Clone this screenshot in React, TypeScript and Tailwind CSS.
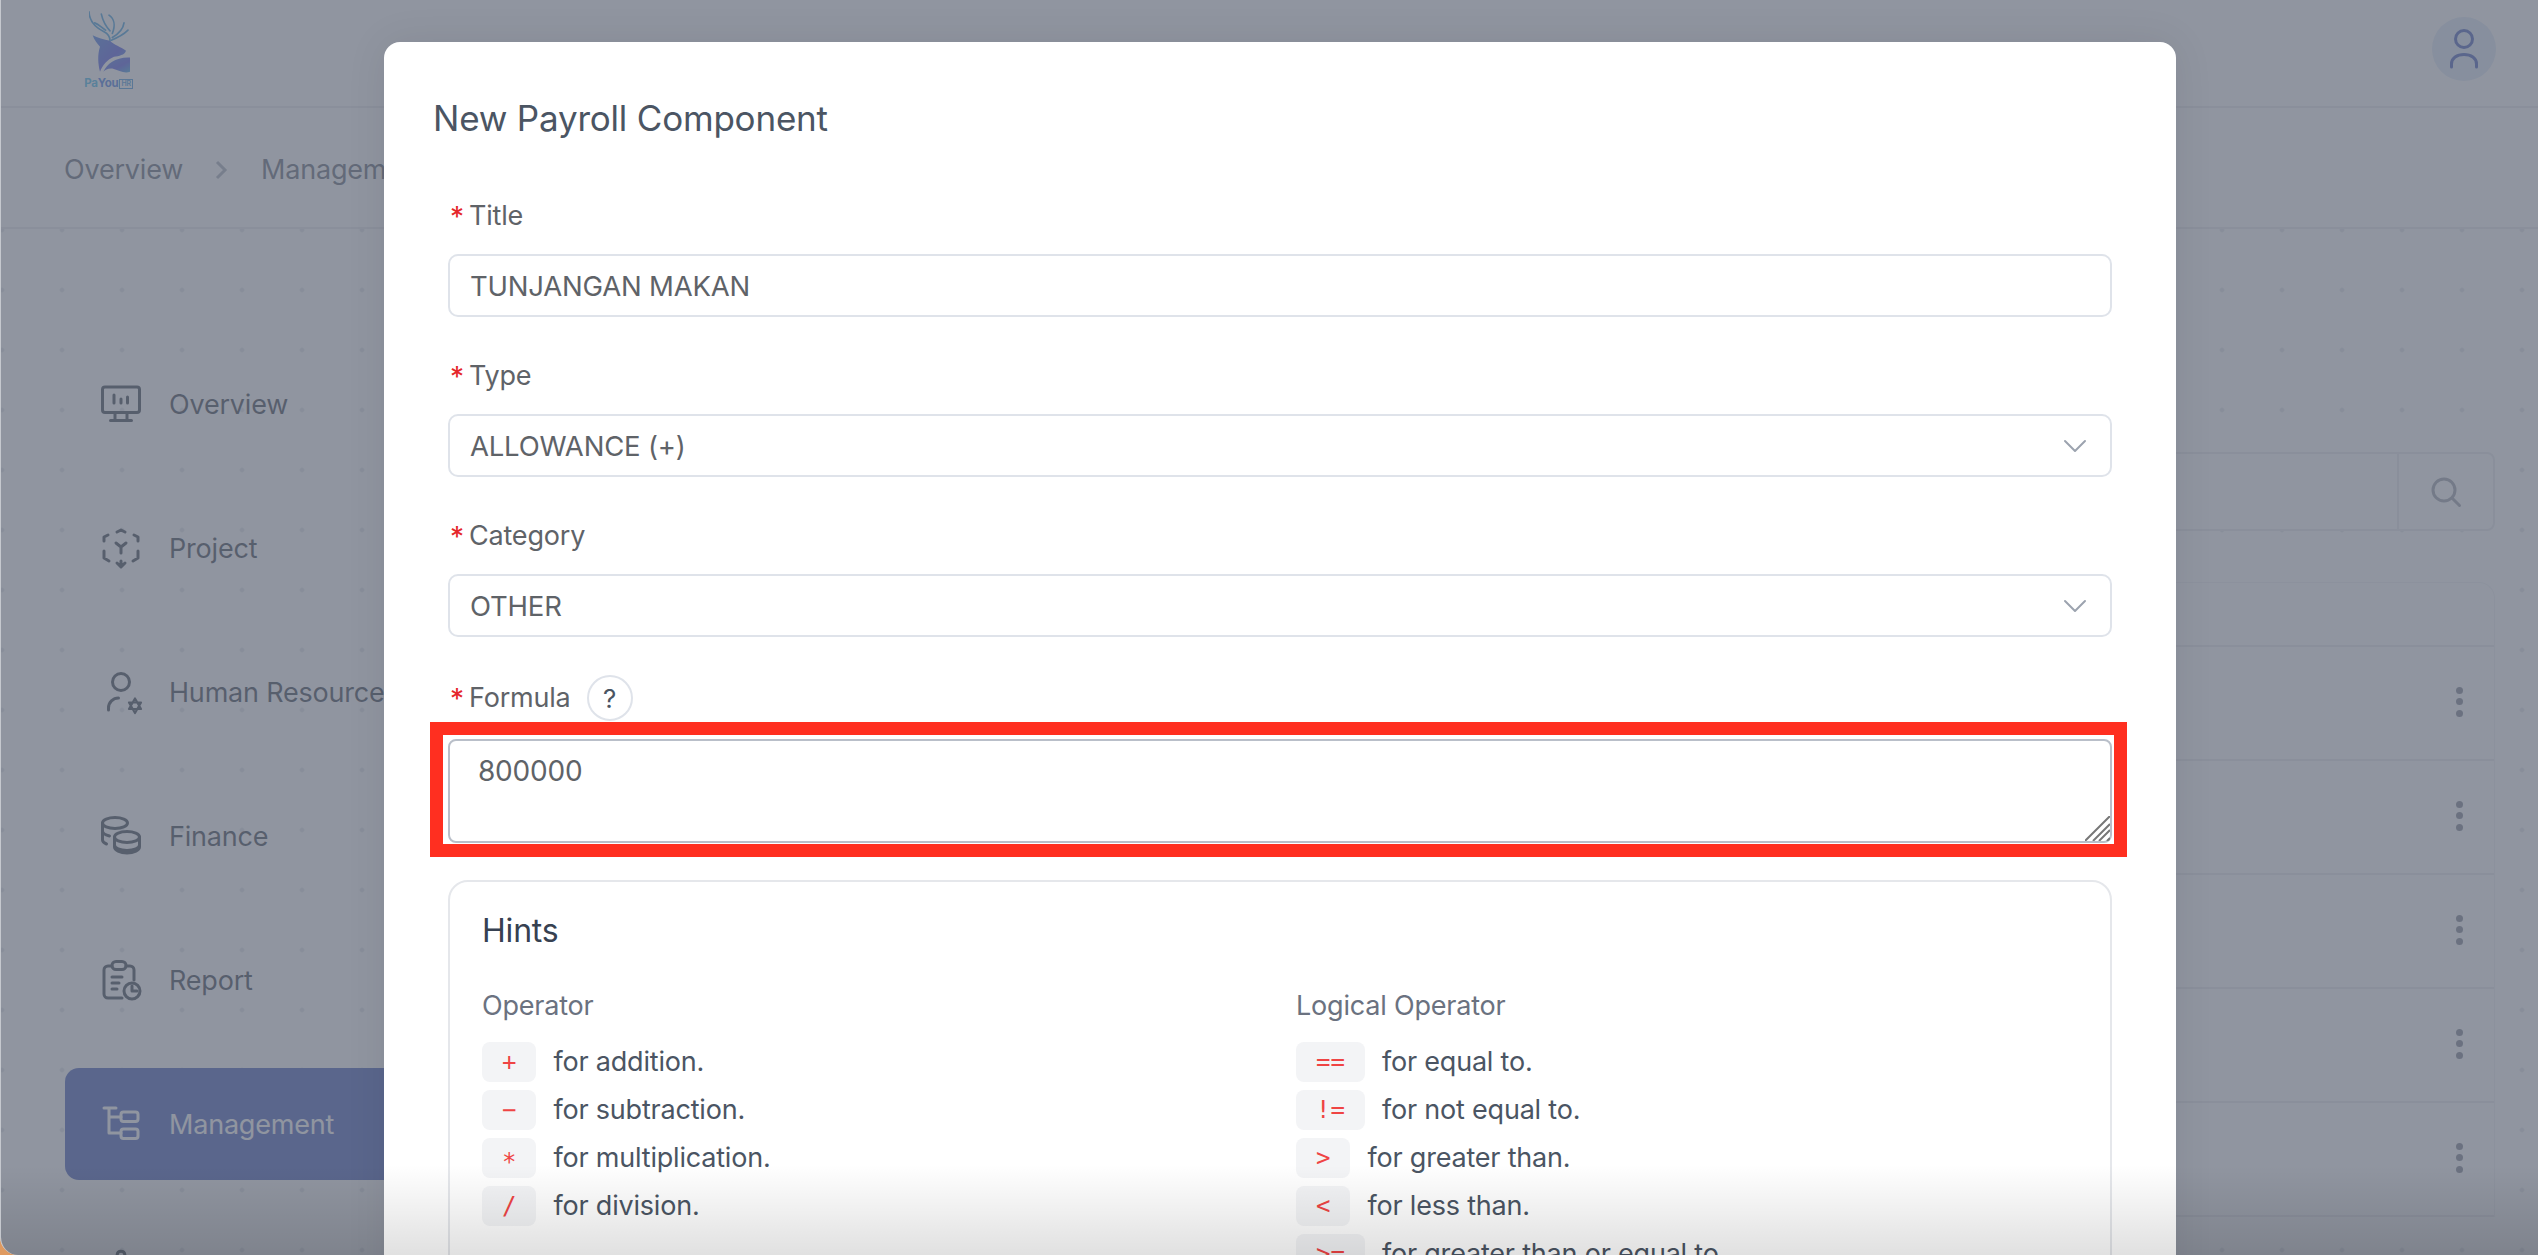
import React from "react";
import { Settings } from "lucide-react";

const navItems: { name: string; active?: boolean; icon: React.ReactNode }[] = [
  {
    name: "Overview",
    icon: (
      <>
        <rect x="1.5" y="3" width="37" height="25.5" rx="2.5" />
        <path d="M14 29v7M26 29v7M9.5 36.5h21M13 11v8M20 15v4M26.5 13v6" />
      </>
    ),
  },
  {
    name: "Project",
    icon: (
      <>
        <path d="M16 4l4-2 4 2M3 13V9l4-2M37 13V9l-4-2M3 23v7l5 3M37 23v7l-5 3M20 33v5M16 35l4 4 4-4M15 15l5 4 5-4M20 19v6" />
      </>
    ),
  },
  {
    name: "Human Resource",
    icon: (
      <>
        <circle cx="20" cy="10" r="8.5" />
        <path d="M7.5 38v-2a10 10 0 0 1 10-10" />
        <path d="M34 26.5l6 10.5H28zM34 41l-6-10.5h12z" strokeWidth="2.2" />
      </>
    ),
  },
  {
    name: "Finance",
    icon: (
      <>
        <ellipse cx="14" cy="7" rx="12.5" ry="5.5" />
        <path d="M1.5 7v17c0 2 1.5 3 4 4M1.5 15c0 2.500 3 4 7 5" />
        <ellipse cx="26" cy="21" rx="12.500" ry="5.500" />
        <path d="M13.500 21v10c0 3 5.500 6 12.500 6s12.500-3 12.500-6V21M13.500 29c0 3 5.500 5.500 12.500 5.500s12.500-2.500 12.500-5.500" />
      </>
    ),
  },
  {
    name: "Report",
    icon: (
      <>
        <path d="M11 6H7a4 4 0 0 0-4 4v24a4 4 0 0 0 4 4h14M25 6h4a4 4 0 0 1 4 4v10" />
        <rect x="11" y="1.500" width="14" height="8" rx="4" />
        <path d="M11 17h10M11 23h7M11 29h5" />
        <circle cx="31" cy="31" r="8" />
        <path d="M31 26v5h5" />
      </>
    ),
  },
  {
    name: "Management",
    active: true,
    icon: (
      <>
        <path d="M3 4h12M8 4v25h12M8 13h12" />
        <rect x="20" y="8" width="17" height="9.500" rx="2.500" />
        <rect x="20" y="25" width="17" height="9.500" rx="2.500" />
      </>
    ),
  },
];

const operators = [
  { op: "+", text: "for addition." },
  { op: "−", text: "for subtraction." },
  { op: "*", text: "for multiplication." },
  { op: "/", text: "for division." },
];

const logicalOperators = [
  { op: "==", text: "for equal to." },
  { op: "!=", text: "for not equal to." },
  { op: ">", text: "for greater than." },
  { op: "<", text: "for less than." },
  { op: ">=", text: "for greater than or equal to." },
];

function Logo() {
  return (
    <div className="mt-[11px] ml-[82px] flex w-[51px] flex-col items-center">
      <svg className="ml-[2px] h-[62px] w-[41px]" viewBox="255 33 123 185">
        <defs>
          <linearGradient id="deer" x1="0" y1="0" x2="1" y2="1">
            <stop offset="0" stopColor="#2a70e0" />
            <stop offset="0.6" stopColor="#3a40e0" />
            <stop offset="1" stopColor="#2098d8" />
          </linearGradient>
        </defs>
        <g fill="none" stroke="#2490d8" strokeWidth="5" strokeLinecap="round">
          <path d="M255 35c1 25 15 45 45 60 10 5 18 13 18 27" />
          <path d="M272 68c13 4 23 17 33 22M292 42c4 18 10 33 26 50M315 45c15 10 20 30 10 55M360 68c-2 17-15 32-35 44M372 90c-12 12-30 22-50 30" />
        </g>
        <path
          fill="url(#deer)"
          d="M266 105c14 7 34 13 52 17 12 13 32 18 48 30-4 13-21 16-36 18-20 8-34 25-42 45-6-25-8-50 0-75-8-10-18-22-22-35z"
        />
        <path
          fill="url(#deer)"
          d="M298 215c12-25 37-45 80-43v43c-18 7-33-5-53-10-13-1-21 3-27 10z"
        />
      </svg>
      <div className="mt-[5px] flex items-center text-[11.5px] leading-[11px] font-bold">
        <span className="text-[#28b0e8]">Pa</span>
        <span className="text-[#2868e0]">You</span>
        <span className="ml-[1px] border border-[#2888d8] px-[1px] text-[7px] leading-[8px] font-semibold text-[#2888d8]">
          HR
        </span>
      </div>
    </div>
  );
}

function Sidebar() {
  return (
    <aside className="flex w-[430px] shrink-0 flex-col gap-8 pt-[119px] pl-16">
      {navItems.map((item) => (
        <div
          key={item.name}
          className={`flex h-[112px] shrink-0 items-center gap-7 rounded-[14px] pl-9 ${
            item.active ? "bg-[#2946b0] text-white" : "text-[#1f2937]"
          }`}
        >
          <svg
            className="h-10 w-10 shrink-0 overflow-visible"
            viewBox="0 0 40 40"
            fill="none"
            stroke="currentColor"
            strokeWidth="3"
            strokeLinecap="round"
            strokeLinejoin="round"
          >
            {item.icon}
          </svg>
          <span className="pt-[2px] text-[27px]">{item.name}</span>
        </div>
      ))}
      <div className="flex h-[112px] shrink-0 items-center gap-7 pl-9 text-[#1f2937]">
        <Settings className="h-10 w-10" strokeWidth={1.8} />
      </div>
    </aside>
  );
}

function Kebab() {
  return (
    <div className="flex flex-col gap-[4.500px] pb-[3px]">
      <span className="h-[7px] w-[7px] rounded-full bg-[#6b7280]" />
      <span className="h-[7px] w-[7px] rounded-full bg-[#6b7280]" />
      <span className="h-[7px] w-[7px] rounded-full bg-[#6b7280]" />
    </div>
  );
}

function MainPanel() {
  return (
    <main className="flex flex-1 flex-col pt-[223px] pr-[43px]">
      <div className="ml-auto flex h-[79px] w-[700px] rounded-lg border-2 border-[#e5e7eb] bg-white">
        <div className="flex-1" />
        <div className="flex w-[96px] items-center justify-center border-l-2 border-[#e5e7eb]">
          <svg
            className="h-8 w-8"
            viewBox="0 0 32 32"
            fill="none"
            stroke="#8f959f"
            strokeWidth="3"
            strokeLinecap="round"
          >
            <circle cx="14" cy="14" r="11" />
            <path d="M22 22l7.500 7.500" />
          </svg>
        </div>
      </div>
      <div className="mt-[51px] rounded-tr-[16px] border-t border-r border-[#eef0f3] bg-white">
        <div className="h-[64px] border-b-2 border-[#e5e7eb]" />
        {[0, 1, 2, 3, 4].map((row) => (
          <div
            key={row}
            className="flex h-[114px] items-center justify-end border-b-2 border-[#e5e7eb] pr-[31px]"
          >
            <Kebab />
          </div>
        ))}
      </div>
    </main>
  );
}

function FieldLabel({ children }: { children: React.ReactNode }) {
  return (
    <div className="flex items-center text-[27px] text-[#5f6368]">
      <span className="mt-[2px] ml-[2px] w-[19px] text-[28px] leading-none text-[#e5252a]">*</span>
      {children}
    </div>
  );
}

function SelectField({ value }: { value: string }) {
  return (
    <div className="flex h-[63px] items-center justify-between rounded-[10px] border-2 border-[#dfe3ea] pr-[23px] pl-[20px] text-[27.500px] text-[#5f6368]">
      <span className="pt-[2px]">{value}</span>
      <svg
        className="h-[14px] w-[24px]"
        viewBox="0 0 24 14"
        fill="none"
        stroke="#9ca3af"
        strokeWidth="2"
        strokeLinecap="round"
        strokeLinejoin="round"
      >
        <path d="M2 2l10 10L22 2" />
      </svg>
    </div>
  );
}

function HintRow({ op, text }: { op: string; text: string }) {
  return (
    <div className="flex h-10 shrink-0 items-center gap-[17px]">
      <code className="flex h-10 items-center rounded-lg bg-[#f3f4f6] px-5 font-['DejaVu_Sans_Mono',monospace] text-[24px] tracking-normal text-[#ef4444]">
        <span className={op === "*" ? "translate-y-[4px]" : ""}>{op}</span>
      </code>
      <span className="text-[27px] text-[#4b5563]">{text}</span>
    </div>
  );
}

function PayrollModal() {
  return (
    <div className="absolute inset-0 pl-[383px]">
      <div className="relative mt-[42px] h-[1400px] w-[1792px] rounded-[16px] bg-white px-16 pt-[51px] shadow-[0_0_40px_rgba(0,0,0,0.08)]">
        <h2 className="-ml-[15px] text-[35px] leading-[50px] font-normal text-[#4b5563]">
          New Payroll Component
        </h2>
        <div className="mt-[51px] flex flex-col">
          <div className="mb-4 h-11 leading-[44px]">
            <FieldLabel>Title</FieldLabel>
          </div>
          <div className="flex h-[63px] items-center rounded-[10px] border-2 border-[#dfe3ea] pt-[2px] pl-[20px] text-[27.500px] text-[#5f6368]">
            TUNJANGAN MAKAN
          </div>

          <div className="mt-[37px] mb-4 h-11 leading-[44px]">
            <FieldLabel>Type</FieldLabel>
          </div>
          <SelectField value="ALLOWANCE (+)" />

          <div className="mt-[37px] mb-4 h-11 leading-[44px]">
            <FieldLabel>Category</FieldLabel>
          </div>
          <SelectField value="OTHER" />

          <div className="mt-[38px] mb-[18px] flex h-[46px] items-center">
            <FieldLabel>Formula</FieldLabel>
            <div className="ml-[16px] flex h-[46px] w-[46px] items-center justify-center rounded-full border-2 border-[#dfe3ea] text-[26px] text-[#4b5563]">
              ?
            </div>
          </div>
          <div className="relative h-[104px] rounded-lg border-2 border-[#b9bfc9] px-7 pt-[12px] text-[28px] leading-[36px] text-[#5f6368]">
            800000
            <svg
              className="absolute right-0 bottom-0 h-[25px] w-[25px]"
              viewBox="0 0 25 25"
              stroke="#777"
              strokeWidth="2"
            >
              <path d="M0 25L25 0M8 25L25 8M14 25L25 14M22 25l3-3" />
            </svg>
            {/* red annotation box from the original screenshot */}
            <div className="absolute -top-[19px] -right-[17px] -bottom-[16px] -left-[20px] border-[13px] border-[#ff2f20]" />
          </div>

          <div className="mt-[37px] rounded-[20px] border-2 border-[#e5e7eb] px-8 pt-[27px]">
            <h3 className="text-[32px] leading-[44px] text-[#374151]">Hints</h3>
            <div className="mt-[33px] grid grid-cols-2 gap-8">
              <div>
                <div className="mb-[16px] text-[27px] leading-[40px] text-[#6b7280]">Operator</div>
                <div className="flex flex-col gap-2">
                  {operators.map((row) => (
                    <HintRow key={row.op} op={row.op} text={row.text} />
                  ))}
                </div>
              </div>
              <div>
                <div className="mb-[16px] text-[27px] leading-[40px] text-[#6b7280]">
                  Logical Operator
                </div>
                <div className="flex flex-col gap-2">
                  {logicalOperators.map((row) => (
                    <HintRow key={row.op} op={row.op} text={row.text} />
                  ))}
                </div>
              </div>
            </div>
          </div>
        </div>
      </div>
    </div>
  );
}

export default function App() {
  return (
    <div className="h-screen w-screen overflow-hidden bg-[#df9a60] font-['Inter',sans-serif] tracking-[-0.2px]">
      <div className="relative flex h-full w-full flex-col overflow-hidden rounded-bl-[18px] border-l border-[#c5c8ce] bg-white">
        <header className="flex h-[108px] shrink-0 items-start justify-between border-b-2 border-[#e5e7eb] pr-[42px]">
          <Logo />
          <div className="mt-[17px] flex h-16 w-16 items-center justify-center rounded-full bg-[#dbe6f5]">
            <svg
              className="h-16 w-16"
              viewBox="0 0 64 64"
              fill="none"
              stroke="#2846b0"
              strokeWidth="3"
              strokeLinecap="round"
            >
              <circle cx="32" cy="22" r="8.500" />
              <path d="M19.500 50v-3c0-6 5.500-9.500 12.500-9.500s12.500 3.500 12.500 9.500v3" />
            </svg>
          </div>
        </header>

        <nav className="flex h-[121px] shrink-0 items-center gap-[29px] border-b-2 border-[#e5e7eb] pt-[5px] pl-[63px] text-[27px] text-[#4b5563]">
          <span>Overview</span>
          <svg
            className="h-5 w-5"
            viewBox="0 0 20 20"
            fill="none"
            stroke="#9ca3af"
            strokeWidth="3"
          >
            <path d="M5 2l8 8-8 8" />
          </svg>
          <span>Management</span>
        </nav>

        <div className="flex flex-1 bg-[radial-gradient(circle,#dde0e5_1.500px,transparent_3px)] bg-size-[60px_60px] bg-position-[-29px_-29px]">
          <Sidebar />
          <MainPanel />
        </div>

        <div className="absolute inset-0 bg-[#6b7280]/75" />
        <PayrollModal />
        {/* darkening along the bottom edge of the capture */}
        <div className="pointer-events-none absolute inset-x-0 bottom-0 h-[90px] bg-gradient-to-b from-transparent to-black/12" />
      </div>
    </div>
  );
}
